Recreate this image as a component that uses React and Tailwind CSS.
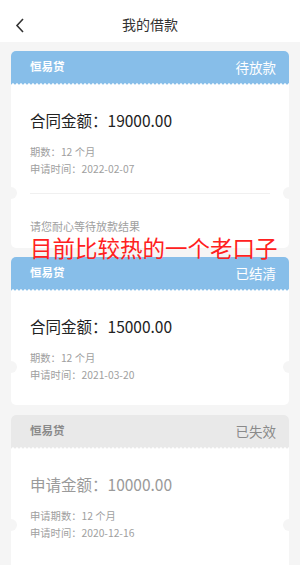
import React from "react";

const font = { fontFamily: '"Noto Sans CJK SC", "Noto Sans", sans-serif' };

function Scallop() {
  return (
    <div className="h-[2px] w-full bg-[radial-gradient(circle_at_50%_100%,#ffffff_1.4px,transparent_1.9px)] bg-[length:4px_2px] bg-repeat-x" />
  );
}

function Notches({ top }) {
  return (
    <>
      <div className={`absolute -left-[6px] h-[12px] w-[12px] rounded-full bg-[#f5f5f5] ${top}`} />
      <div className={`absolute -right-[6px] h-[12px] w-[12px] rounded-full bg-[#f5f5f5] ${top}`} />
    </>
  );
}

function Card({ gray, status, amountLabel, amount, rows, notchTop, footer, bodyPad }) {
  return (
    <div className="relative mx-[11px] overflow-hidden rounded-[5px] bg-white">
      <div className={gray ? "bg-[#e9e9e9]" : "bg-[#87bee9]"}>
        <div className="flex h-[32px] items-center justify-between pl-[19px] pr-[13px]">
          <span className={`text-[11.5px] font-bold ${gray ? "text-[#8a8a8a]" : "text-white"}`}>恒易贷</span>
          <span className={`text-[13.5px] ${gray ? "text-[#8a8a8a]" : "text-white"}`}>{status}</span>
        </div>
        <Scallop />
      </div>
      <div className={`px-[19px] pt-[24px] ${bodyPad}`}>
        <div className={`text-[15.5px] leading-[22px] ${gray ? "text-[#9a9a9a]" : "text-[#222]"}`}>
          {amountLabel}：{amount}
        </div>
        <div className="mt-[12px] flex flex-col">
          {rows.map((r) => (
            <div key={r} className="text-[10.3px] leading-[17px] text-[#a0a0a0]">
              {r}
            </div>
          ))}
        </div>
        {footer}
      </div>
      <Notches top={notchTop} />
    </div>
  );
}

export default function App() {
  return (
    <div className="relative h-[565px] w-[300px] overflow-hidden bg-[#f5f5f5]" style={font}>
      <div className="relative flex h-[42px] items-center justify-center bg-white pt-[7px]">
        <svg className="absolute left-[15px] top-[18px]" width="10" height="15" viewBox="0 0 10 15">
          <polyline points="8,1 2,7.5 8,14" fill="none" stroke="#333" strokeWidth="1.6" />
        </svg>
        <span className="text-[14px] text-[#333]">我的借款</span>
      </div>
      <div className="flex flex-col gap-[9px] pt-[9px]">
        <Card
          status="待放款"
          amountLabel="合同金额"
          amount="19000.00"
          rows={["期数：12 个月", "申请时间：2022-02-07"]}
          notchTop="top-[136px]"
          bodyPad="pb-[14px]"
          footer={
            <>
              <div className="mt-[16px] h-px bg-[#f0f0f0]" />
              <div className="mt-[24px] text-[11px] leading-[16px] text-[#a0a0a0]">请您耐心等待放款结果</div>
            </>
          }
        />
        <Card
          status="已结清"
          amountLabel="合同金额"
          amount="15000.00"
          rows={["期数：12 个月", "申请时间：2021-03-20"]}
          notchTop="top-[104px]"
          bodyPad="pb-[22px]"
        />
        <div className="mt-[1px]">
          <Card
            gray
            status="已失效"
            amountLabel="申请金额"
            amount="10000.00"
            rows={["申请期数：12 个月", "申请时间：2020-12-16"]}
            notchTop="top-[104px]"
            bodyPad="pb-[40px]"
          />
        </div>
      </div>
      <div className="absolute left-[30px] top-[236px] text-[22.5px] leading-[22px] text-[#ff2020]">
        目前比较热的一个老口子
      </div>
    </div>
  );
}
